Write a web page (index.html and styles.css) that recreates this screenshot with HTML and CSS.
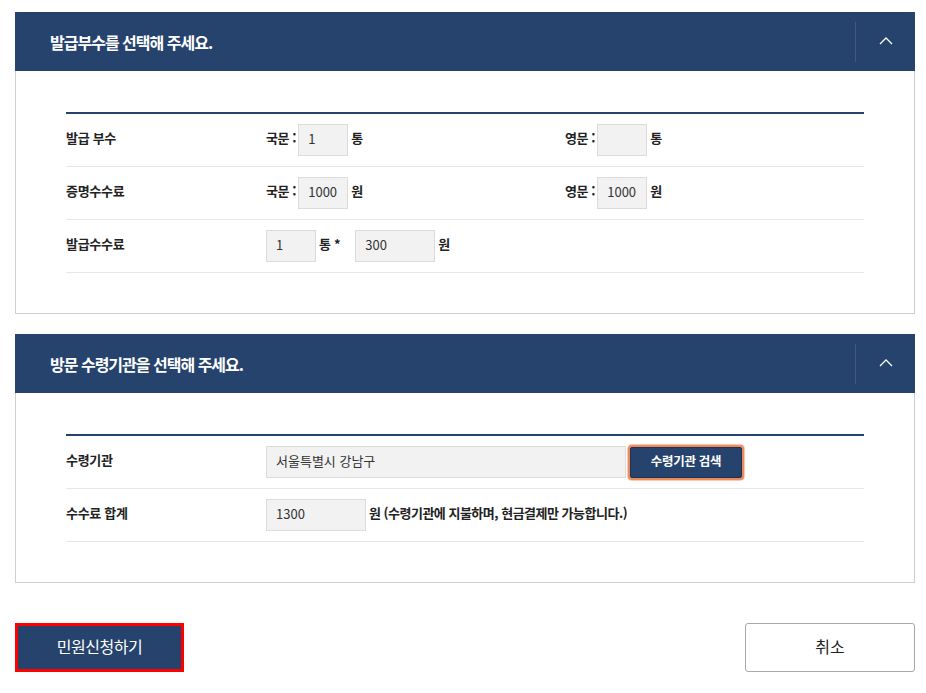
FILE: index.html
```html
<!DOCTYPE html>
<html lang="ko">
<head>
<meta charset="utf-8">
<title>발급부수 선택</title>
<link rel="stylesheet" href="styles.css">
</head>
<body>
<div class="wrap">
  <section class="panel">
    <div class="panel-head">
      <h2 class="panel-title">발급부수를 선택해 주세요.</h2>
      <button class="toggle" type="button" aria-label="접기">
        <svg width="14" height="9" viewBox="0 0 14 9"><polyline points="1,8 7,2 13,8" fill="none" stroke="#fff" stroke-width="1.3"/></svg>
      </button>
    </div>
    <div class="panel-body">
      <div class="table">
        <div class="row">
          <div class="label">발급 부수</div>
          <div class="field"><span class="pre">국문 :</span><input class="inp w50" type="text" value="1" readonly><span class="unit">통</span></div>
          <div class="field"><span class="pre">영문 :</span><input class="inp w50" type="text" value="" readonly><span class="unit">통</span></div>
        </div>
        <div class="row">
          <div class="label">증명수수료</div>
          <div class="field"><span class="pre">국문 :</span><input class="inp w50" type="text" value="1000" readonly><span class="unit">원</span></div>
          <div class="field"><span class="pre">영문 :</span><input class="inp w50" type="text" value="1000" readonly><span class="unit">원</span></div>
        </div>
        <div class="row">
          <div class="label">발급수수료</div>
          <div class="field span2"><input class="inp w50" type="text" value="1" readonly><span class="unit">통 *</span><input class="inp w80" type="text" value="300" readonly><span class="unit">원</span></div>
        </div>
      </div>
    </div>
  </section>

  <section class="panel">
    <div class="panel-head">
      <h2 class="panel-title">방문 수령기관을 선택해 주세요.</h2>
      <button class="toggle" type="button" aria-label="접기">
        <svg width="14" height="9" viewBox="0 0 14 9"><polyline points="1,8 7,2 13,8" fill="none" stroke="#fff" stroke-width="1.3"/></svg>
      </button>
    </div>
    <div class="panel-body">
      <div class="table">
        <div class="row">
          <div class="label">수령기관</div>
          <div class="field span2"><input class="inp w360" type="text" value="서울특별시 강남구" readonly><button class="search" type="button">수령기관 검색</button></div>
        </div>
        <div class="row">
          <div class="label">수수료 합계</div>
          <div class="field span2"><input class="inp w100" type="text" value="1300" readonly><span class="unit note">원 (수령기관에 지불하며, 현금결제만 가능합니다.)</span></div>
        </div>
      </div>
    </div>
  </section>

  <div class="actions">
    <button class="btn primary" type="button">민원신청하기</button>
    <button class="btn cancel" type="button">취소</button>
  </div>
</div>
</body>
</html>
```

FILE: styles.css
```css
* { box-sizing: border-box; }
html, body { margin: 0; padding: 0; background: #fff; }
body {
  font-family: "Noto Sans CJK KR", "Noto Sans", sans-serif;
  color: #222;
}
.wrap {
  width: 900px;
  margin-left: 15px;
  padding-top: 12px;
}
.panel { margin-bottom: 20px; }
.panel-head {
  height: 59px;
  background: #26436e;
  display: flex;
  align-items: center;
}
.panel-title {
  flex: 1;
  margin: 0;
  padding-left: 35px;
  font-size: 16px;
  font-weight: 700;
  letter-spacing: -1px;
  color: #fff;
  line-height: 1;
}
.toggle {
  width: 60px;
  height: 40px;
  border: 0;
  border-left: 1px solid rgba(255,255,255,0.12);
  background: transparent;
  padding: 0;
  display: flex;
  align-items: center;
  justify-content: center;
}
.toggle svg { display: block; margin-top: -2px; }
.panel-body {
  border: 1px solid #cfcfcf;
  border-top: 0;
  padding: 41px 50px 40px;
}
.table { border-top: 2px solid #26436e; }
.row {
  display: grid;
  grid-template-columns: 200px 1fr 1fr;
  align-items: center;
  height: 53px;
  border-bottom: 1px solid #e6e6e6;
}
.label {
  font-size: 13px;
  font-weight: 700;
  color: #222;
  letter-spacing: -0.3px;
  padding-bottom: 6px;
}
.field {
  display: flex;
  align-items: center;
  font-size: 13px;
  font-weight: 700;
  color: #222;
}
.span2 { grid-column: 2 / 4; }
.pre { margin-right: 2px; letter-spacing: -0.4px; padding-bottom: 5px; }
.unit { margin: 0 4px 0 3px; letter-spacing: -0.3px; padding-bottom: 5px; }
.unit + .inp { margin-left: 11px; }
.inp {
  height: 32px;
  border: 1px solid #dcdcdc;
  background: #f2f2f2;
  padding: 0 9px 3px;
  font-family: "Noto Sans CJK KR", "Noto Sans", sans-serif;
  font-size: 13px;
  color: #333;
  outline: none;
}
.w50 { width: 50px; }
.w80 { width: 80px; }
.w100 { width: 100px; }
.w360 { width: 360px; }
.note { letter-spacing: -0.5px; }
.search {
  margin-left: 4px;
  width: 112px;
  height: 31px;
  background: #26436e;
  border: 1px solid #1c3358;
  color: #fff;
  font-family: "Noto Sans CJK KR", "Noto Sans", sans-serif;
  font-size: 12.5px;
  font-weight: 700;
  letter-spacing: -0.3px;
  box-shadow: 0 0 0 2px #ec8a5a, 0 0 0 3px rgba(236,138,90,0.45);
  border-radius: 2px;
  padding: 0 0 3px;
}
.actions {
  display: flex;
  justify-content: space-between;
  margin-top: 40px;
}
.btn {
  height: 49px;
  font-family: "Noto Sans CJK KR", "Noto Sans", sans-serif;
  font-size: 16px;
  padding: 0 0 3px;
}
.primary {
  width: 169px;
  background: #26436e;
  color: #fff;
  border: 3px solid #ff0000;
  letter-spacing: -0.5px;
}
.cancel {
  width: 170px;
  background: #fff;
  color: #222;
  border: 1px solid #a9a9a9;
  border-radius: 3px;
}
```
